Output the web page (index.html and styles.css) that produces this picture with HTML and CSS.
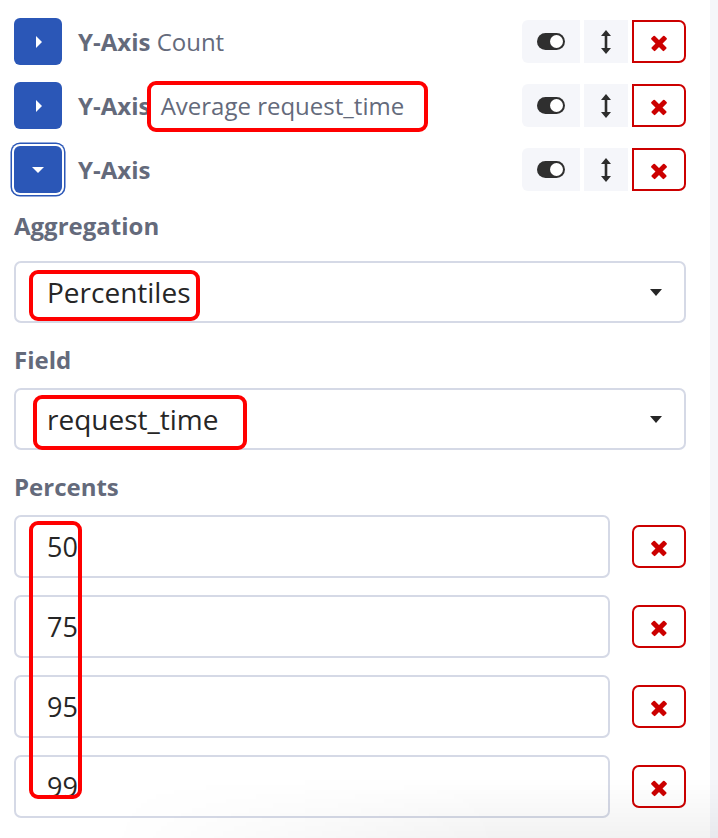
FILE: index.html
```html
<!DOCTYPE html>
<html lang="en">
<head>
  <meta charset="UTF-8">
  <title>Y-Axis Editor</title>
  <link rel="stylesheet" href="styles.css">
</head>
<body>

<div class="page">
  <div class="panel">

    <div class="axis-row">
      <button class="expand-btn"><span class="caret-right"></span></button>
      <div class="axis-title"><b>Y-Axis</b> <span>Count</span></div>
      <div class="axis-actions">
        <span class="act act-toggle"><span class="toggle-icon"></span></span>
        <span class="act act-move">
          <svg width="12" height="26" viewBox="0 0 12 26"><path d="M6 1 L11 7 H7.3 V19 H11 L6 25 L1 19 H4.7 V7 H1 Z" fill="#2d2d2d"/></svg>
        </span>
        <button class="del-btn"><span class="x-icon"></span></button>
      </div>
    </div>

    <div class="axis-row">
      <button class="expand-btn"><span class="caret-right"></span></button>
      <div class="axis-title"><b>Y-Axis</b> <span class="mark mark-title">Average request_time</span></div>
      <div class="axis-actions">
        <span class="act act-toggle"><span class="toggle-icon"></span></span>
        <span class="act act-move">
          <svg width="12" height="26" viewBox="0 0 12 26"><path d="M6 1 L11 7 H7.3 V19 H11 L6 25 L1 19 H4.7 V7 H1 Z" fill="#2d2d2d"/></svg>
        </span>
        <button class="del-btn"><span class="x-icon"></span></button>
      </div>
    </div>

    <div class="axis-row">
      <button class="expand-btn open"><span class="caret-down"></span></button>
      <div class="axis-title"><b>Y-Axis</b></div>
      <div class="axis-actions">
        <span class="act act-toggle"><span class="toggle-icon"></span></span>
        <span class="act act-move">
          <svg width="12" height="26" viewBox="0 0 12 26"><path d="M6 1 L11 7 H7.3 V19 H11 L6 25 L1 19 H4.7 V7 H1 Z" fill="#2d2d2d"/></svg>
        </span>
        <button class="del-btn"><span class="x-icon"></span></button>
      </div>
    </div>

    <div class="field-label label-agg">Aggregation</div>
    <div class="select-box">
      <span class="mark mark-agg">Percentiles</span>
      <span class="select-caret"></span>
    </div>

    <div class="field-label">Field</div>
    <div class="select-box">
      <span class="mark mark-field">request_time</span>
      <span class="select-caret"></span>
    </div>

    <div class="field-label">Percents</div>
    <div class="percents">
      <div class="mark-column"></div>
      <div class="pct-row">
        <div class="pct-input">50</div>
        <button class="del-btn"><span class="x-icon"></span></button>
      </div>
      <div class="pct-row">
        <div class="pct-input">75</div>
        <button class="del-btn"><span class="x-icon"></span></button>
      </div>
      <div class="pct-row">
        <div class="pct-input">95</div>
        <button class="del-btn"><span class="x-icon"></span></button>
      </div>
      <div class="pct-row">
        <div class="pct-input">99</div>
        <button class="del-btn"><span class="x-icon"></span></button>
      </div>
    </div>

  </div>
  <div class="side-strip"></div>
  <div class="bottom-fade"></div>
</div>

</body>
</html>
```

FILE: styles.css
```css
body {
  margin: 0;
  background: #ffffff;
  font-family: "Open Sans", "Noto Sans", sans-serif;
}

.page {
  position: relative;
  display: flex;
  width: 718px;
  height: 838px;
  overflow: hidden;
}

.panel {
  width: 672px;
  padding: 18px 24px 0 14px;
}

.side-strip {
  margin-left: auto;
  width: 8px;
  background: #f5f6fa;
}

.bottom-fade {
  position: absolute;
  left: 0;
  right: 0;
  bottom: 0;
  height: 60px;
  background: linear-gradient(to bottom, rgba(0,0,0,0), rgba(0,0,0,0.05));
  -webkit-mask-image: linear-gradient(to right, transparent 15%, black 70%);
  pointer-events: none;
}

/* axis rows */
.axis-row {
  display: flex;
  align-items: center;
  height: 47px;
  margin-bottom: 17px;
}

.expand-btn {
  width: 48px;
  height: 47px;
  border: none;
  border-radius: 6px;
  background: #2b57b7;
  display: flex;
  align-items: center;
  justify-content: center;
  margin-right: 16px;
  padding: 0;
  flex-shrink: 0;
}

.expand-btn.open {
  box-shadow: 0 0 0 2px #ffffff, 0 0 0 3.5px #2b57b7;
}

.caret-right {
  width: 0;
  height: 0;
  border-top: 6px solid transparent;
  border-bottom: 6px solid transparent;
  border-left: 6px solid #ffffff;
  margin-left: 2px;
}

.caret-down {
  width: 0;
  height: 0;
  border-left: 6px solid transparent;
  border-right: 6px solid transparent;
  border-top: 6px solid #ffffff;
}

.axis-title {
  font-size: 24px;
  color: #646a7b;
  white-space: nowrap;
}

.axis-title b {
  font-weight: 700;
}

.axis-actions {
  margin-left: auto;
  display: flex;
  gap: 4px;
  height: 43px;
}

.act {
  display: flex;
  align-items: center;
  justify-content: center;
  background: #f5f6fa;
}

.act-toggle {
  width: 58px;
  border-radius: 6px 0 0 6px;
}

.act-move {
  width: 44px;
}

.toggle-icon {
  position: relative;
  width: 28px;
  height: 17px;
  border-radius: 9px;
  background: #2f2f2f;
}

.toggle-icon::after {
  content: "";
  position: absolute;
  right: 2px;
  top: 2px;
  width: 13px;
  height: 13px;
  border-radius: 50%;
  background: #ffffff;
}

.del-btn {
  width: 54px;
  height: 43px;
  border: 2px solid #cc0000;
  border-radius: 0 7px 7px 0;
  background: #ffffff;
  display: flex;
  align-items: center;
  justify-content: center;
  padding: 0;
  flex-shrink: 0;
}

.x-icon {
  position: relative;
  width: 16px;
  height: 16px;
  margin-top: 2px;
}

.x-icon::before,
.x-icon::after {
  content: "";
  position: absolute;
  left: -1px;
  top: 6px;
  width: 18px;
  height: 4.5px;
  border-radius: 1px;
  background: #cc0000;
  transform: rotate(45deg);
}

.x-icon::after {
  transform: rotate(-45deg);
}

/* fields */
.field-label {
  font-size: 24px;
  font-weight: 700;
  color: #646a7b;
  line-height: 30px;
  margin: 22px 0 13px;
}

.field-label.label-agg {
  margin: 18px 0 20px;
}

.select-box {
  display: flex;
  align-items: center;
  height: 58px;
  border: 2px solid #d5d9e6;
  border-radius: 7px;
  padding: 0 22px 0 31px;
  font-size: 28px;
  color: #262626;
}

.select-caret {
  margin-left: auto;
  width: 0;
  height: 0;
  border-left: 6.5px solid transparent;
  border-right: 6.5px solid transparent;
  border-top: 7px solid #262626;
}

/* annotation marks */
.mark {
  position: relative;
}

.mark::after {
  content: "";
  position: absolute;
  border: 4px solid #ff0000;
  border-radius: 9px;
  pointer-events: none;
}

.mark-title {
  margin-left: 4px;
}

.mark-title::after {
  left: -14px;
  right: -24px;
  top: -8px;
  bottom: -10px;
}

.mark-agg::after {
  left: -18px;
  right: -9px;
  top: -3px;
  bottom: -10px;
}

.mark-field::after {
  left: -14px;
  right: -29px;
  top: -5px;
  bottom: -12px;
}

/* percents */
.percents {
  position: relative;
  display: flex;
  flex-direction: column;
  gap: 17px;
}

.mark-column {
  position: absolute;
  left: 15px;
  top: 6px;
  width: 45px;
  height: 270px;
  border: 4px solid #ff0000;
  border-radius: 9px;
  z-index: 1;
}

.pct-row {
  display: flex;
  align-items: center;
  gap: 22px;
}

.pct-row .del-btn {
  border-radius: 7px;
}

.pct-input {
  width: 562px;
  height: 59px;
  border: 2px solid #d5d9e6;
  border-radius: 7px;
  padding-left: 31px;
  display: flex;
  align-items: center;
  font-size: 27px;
  color: #262626;
}
```
